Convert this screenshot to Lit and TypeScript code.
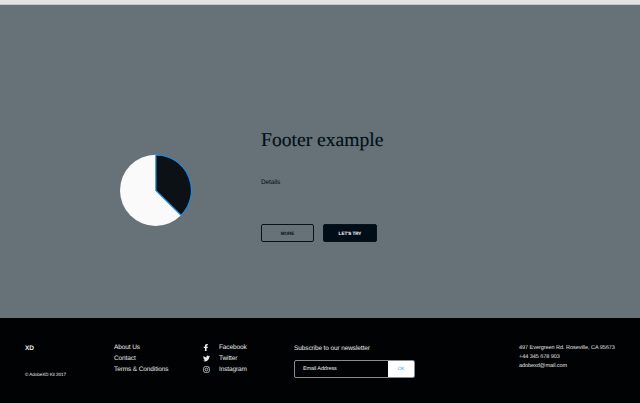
import { LitElement, html, css, svg } from "lit";
import { customElement } from "lit/decorators.js";

const facebook = svg`<svg viewBox="0 0 8 8"><path d="M2.2 8V4.7H.8V3.2h1.4V2.2C2.2.8 3 0 4.3 0h1.2v1.5h-.7c-.5 0-.7.3-.7.8v.9h1.5l-.2 1.5H4.1V8z"/></svg>`;
const twitter = svg`<svg viewBox="0 0 24 24"><path d="M24 4.6a10 10 0 0 1-2.8.8 5 5 0 0 0 2.1-2.7 10 10 0 0 1-3.1 1.2 4.9 4.9 0 0 0-8.4 4.5A14 14 0 0 1 1.7 3.2a4.9 4.9 0 0 0 1.5 6.5 5 5 0 0 1-2.2-.6 4.9 4.9 0 0 0 3.9 4.9 5 5 0 0 1-2.2.1 4.9 4.9 0 0 0 4.6 3.4A10 10 0 0 1 0 19.5a14 14 0 0 0 21.5-12.4A10 10 0 0 0 24 4.6z"/></svg>`;
const instagram = svg`<svg viewBox="0 0 24 24"><g fill="none" stroke="currentColor" stroke-width="2.4"><rect x="2" y="2" width="20" height="20" rx="6"/><circle cx="12" cy="12" r="4.8"/></g><circle cx="18" cy="6" r="1.5"/></svg>`;

@customElement("app-root")
export class AppRoot extends LitElement {
  static styles = css`
    :host {
      display: flex;
      flex-direction: column;
      height: 403px;
      width: 640px;
      overflow: hidden;
      background: #667278;
      font-family: "Liberation Sans", Arial, sans-serif;
      font-size: 6.5px;
      letter-spacing: -0.11px;
      text-rendering: geometricPrecision;
      color: #020e17;
    }
    * { box-sizing: border-box; }
    .top {
      height: 5px;
      flex: none;
      background: #e3e3e3;
      border-bottom: 1px solid #c4c6c7;
    }
    .hero {
      height: 313px;
      flex: none;
      display: flex;
      padding: 123px 0 0 119px;
    }
    .pie {
      width: 73px;
      height: 73px;
      margin: 26px 69px 0 0;
      flex: none;
      display: block;
    }
    h1 {
      margin: 1px 0 0;
      font: 400 19.6px/24px "Liberation Serif", "Times New Roman", serif;
      letter-spacing: 0;
      -webkit-text-stroke: 0.15px currentColor;
      white-space: nowrap;
    }
    .details { margin-top: 24px; line-height: 11px; }
    .buttons { display: flex; gap: 9px; margin-top: 36px; }
    .button {
      width: 53px;
      height: 18px;
      padding: 0;
      border: 1px solid #07121a;
      border-radius: 2px;
      background: none;
      color: #020e17;
      font: 700 4.6px/17px "Liberation Sans", Arial, sans-serif;
      letter-spacing: -0.04px;
      text-rendering: inherit;
      text-align: center;
    }
    .dark { width: 54px; background: #020e17; color: #fff; }
    footer {
      flex: 1;
      display: grid;
      grid-template-columns: 89px 89px 91px 225px auto;
      padding: 24px 0 0 25px;
      background: #010203;
      color: #e9eaea;
      white-space: nowrap;
    }
    .brand { font-weight: 700; line-height: 13px; }
    .copy { font-size: 4.6px; letter-spacing: -0.07px; line-height: 8px; margin-top: 16px; }
    .line { line-height: 11px; }
    .social { display: flex; align-items: center; gap: 9px; }
    .social svg { width: 7px; height: 7px; fill: currentColor; display: block; }
    .news { line-height: 13px; }
    .form {
      display: flex;
      width: 121px;
      height: 18px;
      margin-top: 5px;
      border: 1px solid #8a8c8d;
      border-radius: 2px;
      overflow: hidden;
      font-size: 5.5px;
      line-height: 17px;
    }
    .field { flex: 1; padding-left: 8px; }
    .ok {
      width: 26px;
      background: #fff;
      color: #45a8f0;
      font-size: 4.8px;
      text-align: center;
    }
    .address { font-size: 5.55px; letter-spacing: -0.06px; line-height: 9px; padding-top: 2px; color: #e0e1e1; }
  `;

  render() {
    return html`
      <div class="top"></div>
      <section class="hero">
        <svg class="pie" viewBox="0 0 73 73">
          <circle cx="36.6" cy="36.4" r="35.6" fill="#fafafa" />
          <path d="M36.9 36.4V.9A35.4 35.4 0 0 1 62.1 61.3Z" fill="#0b1115" stroke="#208bdc" stroke-width="1.2" />
        </svg>
        <div>
          <h1>Footer example</h1>
          <div class="details">Details</div>
          <div class="buttons">
            <button class="button">MORE</button>
            <button class="button dark">LET'S TRY</button>
          </div>
        </div>
      </section>
      <footer>
        <div>
          <div class="brand">XD</div>
          <div class="copy">© AdobeXD Kit 2017</div>
        </div>
        <div>
          ${["About Us", "Contact", "Terms & Conditions"].map((t) => html`<div class="line">${t}</div>`)}
        </div>
        <div>
          <div class="line social">${facebook}<span>Facebook</span></div>
          <div class="line social">${twitter}<span>Twitter</span></div>
          <div class="line social">${instagram}<span>Instagram</span></div>
        </div>
        <div>
          <div class="news">Subscribe to our newsletter</div>
          <div class="form">
            <div class="field">Email Address</div>
            <div class="ok">OK</div>
          </div>
        </div>
        <div class="address">
          <div>497 Evergreen Rd. Roseville, CA 95673</div>
          <div>+44 345 678 903</div>
          <div>adobexd@mail.com</div>
        </div>
      </footer>
    `;
  }
}
